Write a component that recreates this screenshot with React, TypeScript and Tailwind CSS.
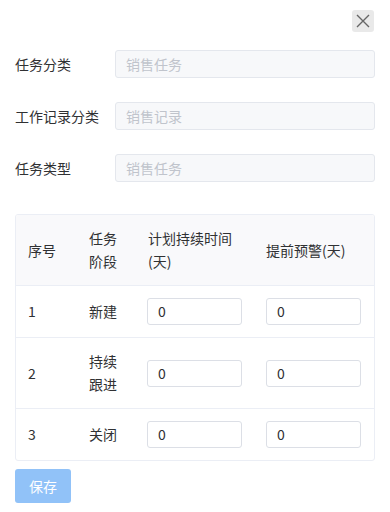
import React from "react";

const rows = [
  { no: 1, stage: "新建" },
  { no: 2, stage: "持续跟进" },
  { no: 3, stage: "关闭" },
];

const fields = [
  { label: "任务分类", value: "销售任务" },
  { label: "工作记录分类", value: "销售记录" },
  { label: "任务类型", value: "销售任务" },
];

const App: React.FC = () => {
  return (
    <div
      className="w-[390px] h-[512px] bg-white text-[#303133] text-[14px]"
      style={{ fontFamily: '"Noto Sans CJK SC", "Noto Sans", sans-serif' }}
    >
      <div className="flex justify-end pt-[10px] pr-[16px]">
        <button className="w-[22px] h-[22px] rounded-[3px] bg-[#e9e9e9] flex items-center justify-center">
          <svg width="14" height="14" viewBox="0 0 14 14" fill="none" stroke="#666" strokeWidth="1.4">
            <path d="M1 1L13 13M13 1L1 13" />
          </svg>
        </button>
      </div>

      <div className="flex flex-col gap-[24px] mt-[18px] px-[15px]">
        {fields.map((f) => (
          <div key={f.label} className="flex items-center">
            <div className="w-[100px] shrink-0">{f.label}</div>
            <div className="flex-1 h-[28px] border border-[#e4e7ed] bg-[#f7f8fa] rounded-[3px] flex items-center px-[10px] text-[#c0c4cc]">
              {f.value}
            </div>
          </div>
        ))}
      </div>

      <div className="mx-[15px] mt-[32px] border border-[#ebeef5] rounded-[3px] overflow-hidden">
        <table className="w-full table-fixed border-collapse leading-[23px]">
          <colgroup>
            <col className="w-[61px]" />
            <col className="w-[59px]" />
            <col className="w-[118px]" />
            <col />
          </colgroup>
          <thead>
            <tr className="bg-[#f9f9fb] text-left">
              <th className="font-normal px-[12px] py-[12px]">序号</th>
              <th className="font-normal px-[12px] py-[12px]">任务阶段</th>
              <th className="font-normal pl-[12px] pr-[12px] py-[12px]">计划持续时间(天)</th>
              <th className="font-normal px-[12px] py-[12px]">提前预警(天)</th>
            </tr>
          </thead>
          <tbody>
            {rows.map((r) => (
              <tr key={r.no} className="border-t border-[#ebeef5]">
                <td className="px-[12px] py-[12px]">{r.no}</td>
                <td className="px-[12px] py-[12px]">{r.stage}</td>
                <td className="pl-[11px] pr-[12px] py-[12px]">
                  <div className="h-[27px] border border-[#dcdfe6] rounded-[3px] flex items-center px-[10px]">0</div>
                </td>
                <td className="pl-[12px] pr-[13px] py-[12px]">
                  <div className="h-[27px] border border-[#dcdfe6] rounded-[3px] flex items-center px-[10px]">0</div>
                </td>
              </tr>
            ))}
          </tbody>
        </table>
      </div>

      <div className="px-[15px] mt-[8px]">
        <button className="w-[56px] h-[34px] rounded-[3px] bg-[#91c2f8] text-white text-[14px] flex items-center justify-center">
          保存
        </button>
      </div>
    </div>
  );
};

export default App;
